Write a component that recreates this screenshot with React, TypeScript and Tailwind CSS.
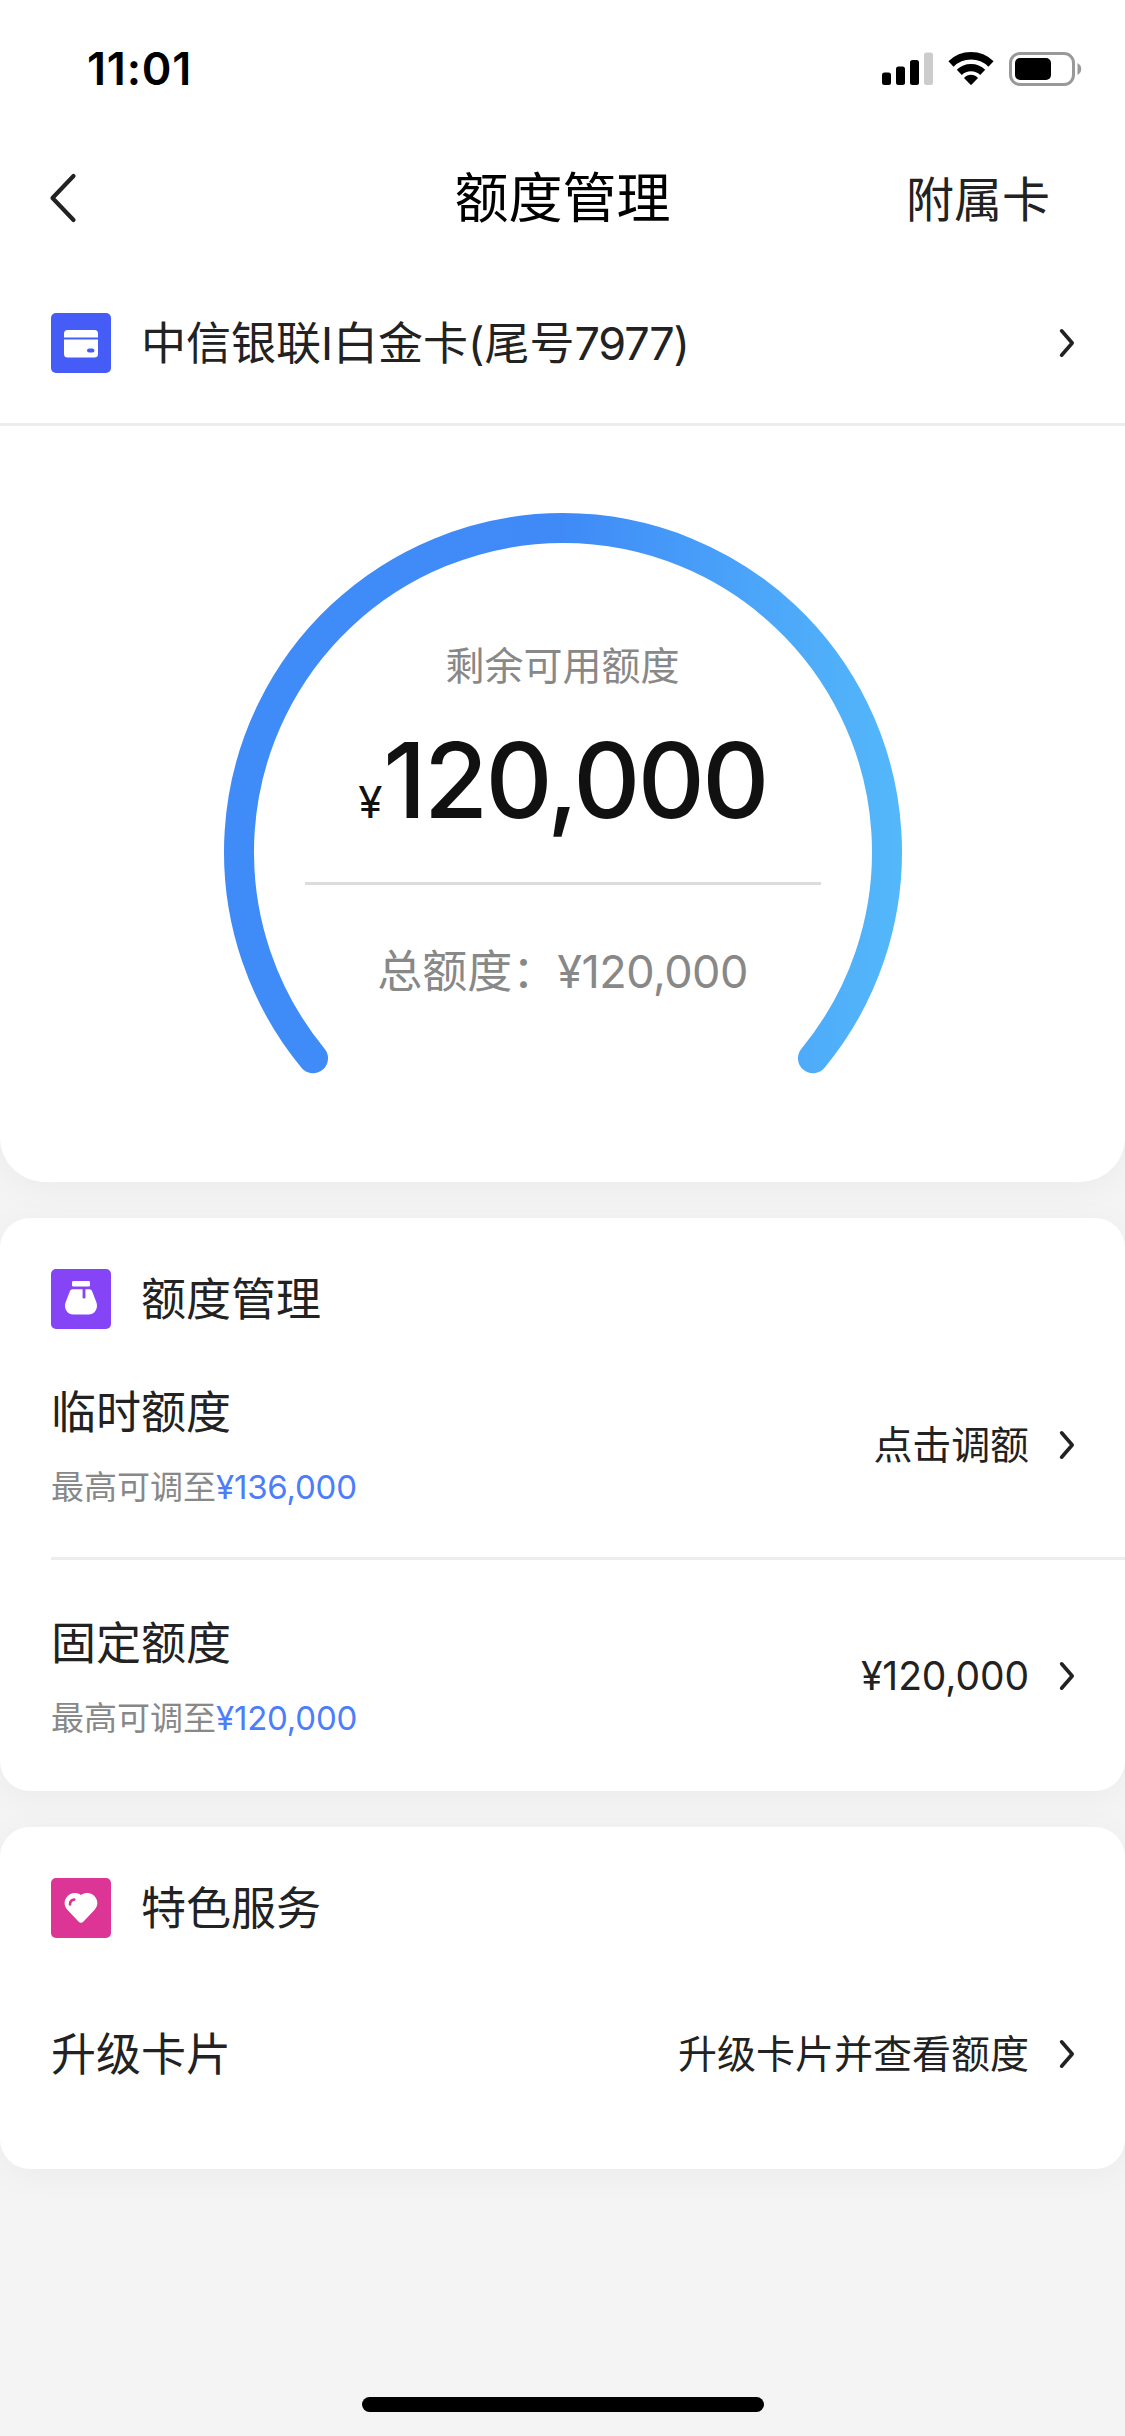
import React from "react";

const ChevronRight: React.FC = () => (
  <svg width="18" height="32" viewBox="0 0 18 32" fill="none" className="shrink-0">
    <path
      d="M3.6 3.8L14.2 16L3.6 28.2"
      stroke="#222222"
      strokeWidth="3.6"
      strokeLinecap="round"
      strokeLinejoin="round"
    />
  </svg>
);

const CardIcon: React.FC = () => (
  <svg width="60" height="60" viewBox="0 0 60 60" className="shrink-0">
    <rect width="60" height="60" rx="5" fill="#465cf6" />
    <path d="M13 24.5V20.5a3.5 3.5 0 0 1 3.5-3.5h27a3.5 3.5 0 0 1 3.5 3.5v4z" fill="#fff" />
    <path d="M13 26.5h34V41a3.5 3.5 0 0 1-3.5 3.5h-27A3.5 3.5 0 0 1 13 41z" fill="#fff" />
    <rect x="36" y="35.5" width="7.4" height="4" rx="2" fill="#465cf6" />
  </svg>
);

const BagIcon: React.FC = () => (
  <svg width="60" height="60" viewBox="0 0 60 60" className="shrink-0">
    <rect width="60" height="60" rx="5" fill="#8544f5" />
    <rect x="21" y="12" width="18" height="5.6" rx="1.4" fill="#fff" />
    <path
      d="M21.5 20.3h17c1.2 0 2 .7 2.5 1.800l4.3 10.900c2.300 6.200-1.300 12.600-7.800 12.600h-15c-6.500 0-10.100-6.400-7.800-12.600l4.300-10.900c.5-1.100 1.300-1.800 2.500-1.800z"
      fill="#fff"
    />
    <path d="M33 20v8.200" stroke="#8544f5" strokeWidth="2.8" strokeLinecap="round" />
  </svg>
);

const HeartIcon: React.FC = () => (
  <svg width="60" height="60" viewBox="0 0 60 60" className="shrink-0">
    <rect width="60" height="60" rx="5" fill="#dc3595" />
    <path
      d="M30 17c5-3.200 11-2.200 14.200 2 3.300 4.300 2.700 9.300-.8 13L32.300 43.700c-1.400 1.400-3.200 1.400-4.600 0L16.600 32c-3.500-3.700-4.100-8.700-.8-13 3.200-4.200 9.200-5.200 14.200-2z"
      fill="#fff"
    />
    <path d="M19 26.4c0-3 1.700-4.700 4.300-4.800" stroke="#dc3595" strokeWidth="2.6" strokeLinecap="round" fill="none" />
  </svg>
);

const StatusBar: React.FC = () => (
  <div className="flex h-[132px] items-start justify-between pt-[42px] pr-[42px] pl-[87px]">
    <span className="h-[54px] text-[45px] leading-[54px] font-semibold tracking-[0.8px] text-black">11:01</span>
    <div className="flex items-center pt-[9px]">
      <svg width="52" height="36" viewBox="0 0 52 36">
        <rect x="0" y="21.5" width="9" height="12.5" rx="2.5" />
        <rect x="14" y="15.5" width="9" height="18.5" rx="2.5" />
        <rect x="28" y="9" width="9" height="25" rx="2.5" />
        <rect x="42" y="1.5" width="9" height="32.5" rx="2.5" fill="#cccccc" />
      </svg>
      <svg width="46" height="36" viewBox="0 0 46 36" fill="none" className="ml-[14px]">
        <path d="M3 13A28.5 28.5 0 0 1 43 13" stroke="#000" strokeWidth="7.4" />
        <path d="M11.3 21.3A16.8 16.8 0 0 1 34.7 21.3" stroke="#000" strokeWidth="7.2" />
        <path d="M16 27c4-4.200 10-4.200 14 0l-6.300 6.600a1 1 0 0 1-1.400 0z" fill="#000" />
      </svg>
      <svg width="75" height="36" viewBox="0 0 75 36" className="ml-[14px]">
        <rect x="2.5" y="2.5" width="63" height="31" rx="9.5" fill="none" stroke="#999" strokeWidth="3" />
        <rect x="7" y="7" width="36" height="22" rx="5" />
        <path d="M69.500 12c5 2.500 5 9.500 0 12z" fill="#999" />
      </svg>
    </div>
  </div>
);

const NavBar: React.FC = () => (
  <div className="grid h-[132px] grid-cols-3 items-center px-[49px]">
    <svg width="30" height="52" viewBox="0 0 30 52" fill="none">
      <path
        d="M24.5 4L3.5 26L24.5 48"
        stroke="#222222"
        strokeWidth="4.2"
        strokeLinecap="round"
        strokeLinejoin="round"
      />
    </svg>
    <h1 className="pt-[2px] text-center text-[54px] leading-[72px] whitespace-nowrap text-black">额度管理</h1>
    <span className="pt-[3px] pr-[26px] text-right text-[48px] leading-[64px]">附属卡</span>
  </div>
);

// Arco de 280 graus, aberto embaixo
const LimitGauge: React.FC = () => (
  <div className="mx-auto grid h-[570px] w-[680px]">
    <svg width="680" height="570" viewBox="0 0 680 570" fill="none" className="col-start-1 row-start-1">
      <defs>
        <linearGradient id="gauge" gradientUnits="userSpaceOnUse" x1="0" y1="0" x2="680" y2="0">
          <stop offset="0" stopColor="#3f8cf8" />
          <stop offset="0.5" stopColor="#3f8af7" />
          <stop offset="0.76" stopColor="#4aa3f9" />
          <stop offset="1" stopColor="#54b8fa" />
        </linearGradient>
      </defs>
      <path
        d="M90 545.2A324 324 0 1 1 590 545.2"
        stroke="url(#gauge)"
        strokeWidth="30"
        strokeLinecap="round"
      />
    </svg>
    <div className="col-start-1 row-start-1 flex flex-col items-center">
      <p className="mt-[125px] h-[56px] text-[39px] leading-[56px] text-[#888888]">剩余可用额度</p>
      <p className="mt-[26px] flex h-[120px] items-baseline leading-[120px] text-[#111111]">
        <span className="mr-[1px] text-[44px]">¥</span>
        <span className="text-[104px] font-medium tracking-[-2.6px]">120,000</span>
      </p>
      <div className="mt-[42px] h-[3px] w-[516px] bg-[#dcdcdc]" />
      <p className="mt-[55px] h-[64px] text-[45px] leading-[64px] text-[#888888]">
        总额度：<span className="tracking-[-0.5px]">¥120,000</span>
      </p>
    </div>
  </div>
);

interface SectionProps {
  icon: React.ReactNode;
  title: string;
  children: React.ReactNode;
}

const Section: React.FC<SectionProps> = ({ icon, title, children }) => (
  <section className="mt-9 rounded-[30px] bg-white pt-[51px] pl-[51px] shadow-[0_6px_36px_rgba(0,0,0,0.04)]">
    <div className="flex h-[60px] items-center">
      {icon}
      <h2 className="ml-[30px] pt-[2px] text-[45px] leading-[60px]">{title}</h2>
    </div>
    {children}
  </section>
);

interface LimitRowProps {
  label: string;
  max: string;
  action: string;
}

const LimitRow: React.FC<LimitRowProps> = ({ label, max, action }) => (
  <div className="flex h-[231px] items-center pr-[49px]">
    <div className="flex-1 pt-[2px]">
      <p className="text-[45px] leading-[64px]">{label}</p>
      <p className="mt-[18px] text-[33px] leading-[48px] text-[#888888]">
        最高可调至<span className="tracking-[-0.2px] text-[#4c7dfb]">{max}</span>
      </p>
    </div>
    <span className="mr-[29px] text-[39px] leading-[56px] tracking-[-0.1px]">{action}</span>
    <ChevronRight />
  </div>
);

const App: React.FC = () => {
  return (
    <div
      lang="zh-CN"
      className="flex h-[2436px] w-[1125px] flex-col overflow-hidden bg-[#f4f4f4] font-['Inter','Noto_Sans_CJK_SC',sans-serif] text-[#222222]"
    >
      <header className="h-[1182px] rounded-b-[45px] bg-white shadow-[0_6px_36px_rgba(0,0,0,0.04)]">
        <StatusBar />
        <NavBar />
        <div className="flex h-[162px] items-center border-b-[3px] border-[#ededed] pr-[49px] pb-px pl-[51px]">
          <CardIcon />
          <span className="ml-[30px] flex-1 pt-[2px] text-[45px] leading-[64px]">
            中信银联I白金卡(尾号<span className="tracking-[-1.2px]">7977)</span>
          </span>
          <ChevronRight />
        </div>
        <div className="pt-[87px]">
          <LimitGauge />
        </div>
      </header>

      <Section icon={<BagIcon />} title="额度管理">
        <LimitRow label="临时额度" max="¥136,000" action="点击调额" />
        <div className="-mt-[3px] h-[3px] bg-[#ededed]" />
        <LimitRow label="固定额度" max="¥120,000" action="¥120,000" />
      </Section>

      <Section icon={<HeartIcon />} title="特色服务">
        <div className="flex h-[231px] items-center pr-[49px]">
          <span className="flex-1 pt-[2px] text-[45px] leading-[64px]">升级卡片</span>
          <span className="mr-[29px] text-[39px] leading-[56px]">升级卡片并查看额度</span>
          <ChevronRight />
        </div>
      </Section>

      <div className="mx-auto mt-auto mb-6 h-[15px] w-[402px] rounded-full bg-black" />
    </div>
  );
};

export default App;
